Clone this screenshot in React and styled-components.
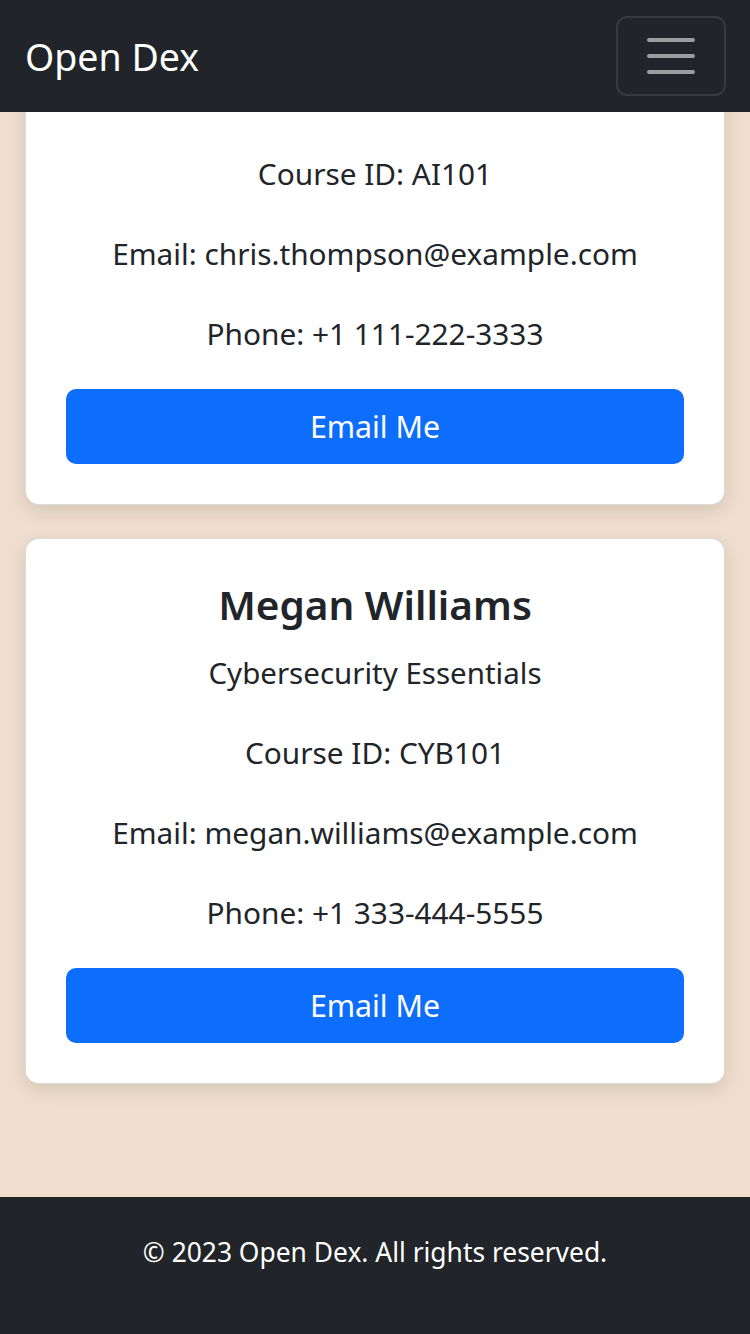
import React, { useLayoutEffect } from "react"
import styled, { createGlobalStyle } from "styled-components"

const GlobalStyle = createGlobalStyle`
    html, body {
        margin: 0;
        padding: 0;
    }
    body {
        background: #efdecd;
        font-family: "Noto Sans", "Open Sans", sans-serif;
        color: #212529;
    }
    * {
        box-sizing: border-box;
    }
`

const Navbar = styled.nav`
    position: fixed;
    top: 0;
    left: 0;
    right: 0;
    z-index: 10;
    height: 112px;
    background: #212529;
    display: flex;
    align-items: center;
    justify-content: space-between;
    padding: 0 24px 0 25px;
`

const Brand = styled.a`
    color: #fff;
    font-size: 37.5px;
    text-decoration: none;
    line-height: 1;
    padding-top: 2px;
`

const Toggler = styled.button`
    width: 110px;
    height: 80px;
    border: 2px solid rgba(255, 255, 255, 0.1);
    border-radius: 11px;
    background: transparent;
    display: flex;
    flex-direction: column;
    align-items: center;
    justify-content: center;
    gap: 12px;
    padding: 0;
`

const TogglerBar = styled.span`
    display: block;
    width: 48px;
    height: 4px;
    border-radius: 2px;
    background: rgba(255, 255, 255, 0.55);
`

const Main = styled.main`
    padding: 148px 25px 113px;
    display: flex;
    flex-direction: column;
    gap: 33px;
`

const Card = styled.div`
    background: #fff;
    border: 1px solid rgba(0, 0, 0, 0.14);
    border-radius: 14px;
    box-shadow: 0 6px 18px rgba(0, 0, 0, 0.11);
    padding: 41px 40px 40px;
    text-align: center;
    display: flex;
    flex-direction: column;
`

const Name = styled.h4`
    margin: 0;
    font-size: 40.5px;
    font-weight: 600;
    line-height: 50px;
`

const Subtitle = styled.p`
    margin: 22px 0 0;
    font-size: 29.5px;
    line-height: 42px;
`

const Info = styled.p`
    margin: 38px 0 0;
    font-size: 29.8px;
    line-height: 42px;
`

const EmailButton = styled.a`
    margin-top: 34px;
    height: 75px;
    display: flex;
    align-items: center;
    justify-content: center;
    background: #0d6efd;
    color: #fff;
    border-radius: 10px;
    font-size: 30.3px;
    text-decoration: none;
`

const Footer = styled.footer`
    background: #212529;
    color: #fff;
    height: 137px;
    display: flex;
    align-items: center;
    justify-content: center;
    font-size: 26.4px;
    padding-bottom: 28px;
`

const teachers = [
    {
        name: "Chris Thompson",
        course: "Artificial Intelligence",
        id: "AI101",
        email: "chris.thompson@example.com",
        phone: "+1 111-222-3333",
    },
    {
        name: "Megan Williams",
        course: "Cybersecurity Essentials",
        id: "CYB101",
        email: "megan.williams@example.com",
        phone: "+1 333-444-5555",
    },
]

const TeacherCard = ({ t }) => (
    <Card>
        <Name>{t.name}</Name>
        <Subtitle>{t.course}</Subtitle>
        <Info>Course ID: {t.id}</Info>
        <Info>Email: {t.email}</Info>
        <Info>Phone: {t.phone}</Info>
        <EmailButton href={`mailto:${t.email}`}>Email Me</EmailButton>
    </Card>
)

export default function App() {
    // the reference shows the page scrolled to its end
    useLayoutEffect(() => {
        window.scrollTo(0, document.documentElement.scrollHeight)
    }, [])

    return (
        <>
            <GlobalStyle />
            <Navbar>
                <Brand href="#">Open Dex</Brand>
                <Toggler aria-label="Toggle navigation">
                    <TogglerBar />
                    <TogglerBar />
                    <TogglerBar />
                </Toggler>
            </Navbar>
            <Main>
                {teachers.map((t) => (
                    <TeacherCard key={t.id} t={t} />
                ))}
            </Main>
            <Footer>© 2023 Open Dex. All rights reserved.</Footer>
        </>
    )
}
